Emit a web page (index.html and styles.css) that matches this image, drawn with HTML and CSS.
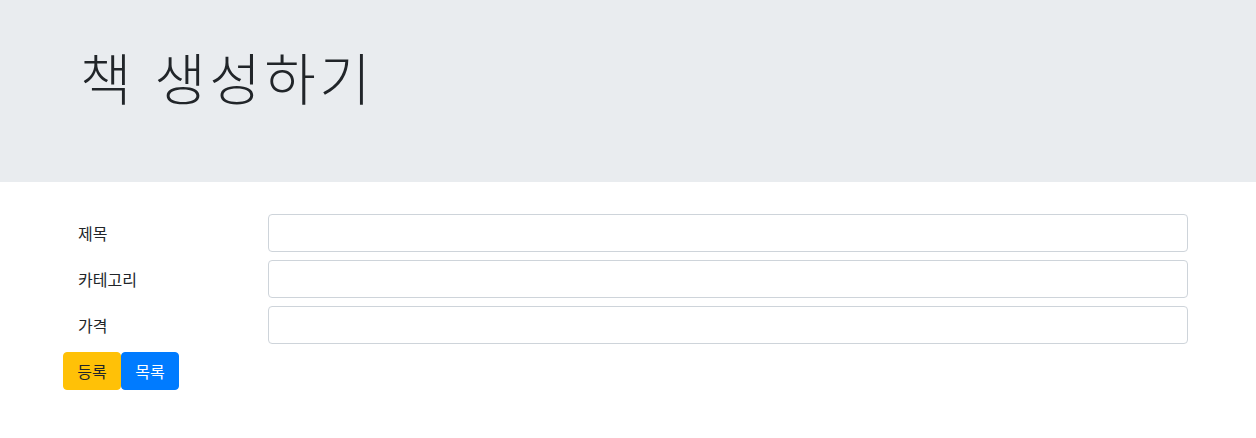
FILE: index.html
```html
<!DOCTYPE html>
<html lang="ko">
<head>
<meta charset="utf-8">
<link rel="stylesheet" href="styles.css">
</head>
<body>
<header class="jumbotron">
  <div class="container">
    <h1 class="title">책 생성하기</h1>
  </div>
</header>
<main class="container">
  <form class="form">
    <div class="row">
      <label class="label">제목</label>
      <div class="field"><input class="input" type="text"></div>
    </div>
    <div class="row">
      <label class="label">카테고리</label>
      <div class="field"><input class="input" type="text"></div>
    </div>
    <div class="row">
      <label class="label">가격</label>
      <div class="field"><input class="input" type="text"></div>
    </div>
    <div class="actions"><button type="button" class="btn btn-warning">등록</button><button type="button" class="btn btn-primary">목록</button></div>
  </form>
</main>
</body>
</html>
```
FILE: styles.css
```css
html, body {
  margin: 0;
  padding: 0;
}
body {
  font-family: "Noto Sans CJK KR", "Noto Sans", sans-serif;
  font-size: 16px;
  line-height: 1.5;
  color: #212529;
  background: #fff;
}
.container {
  width: 1140px;
  margin-left: 63px;
}
.jumbotron {
  background: #e9ecef;
  height: 182px;
  box-sizing: border-box;
  padding-top: 42px;
  margin-bottom: 32px;
}
.jumbotron .container {
  padding-left: 17px;
  box-sizing: border-box;
}
.title {
  margin: 0;
  font-size: 56px;
  font-weight: 300;
  line-height: 67px;
  letter-spacing: 3.5px;
}
.row {
  display: grid;
  grid-template-columns: 190px 1fr;
  margin-bottom: 8px;
}
.label {
  padding: 7px 15px;
  line-height: 24px;
}
.field {
  padding: 0 15px;
}
.input {
  display: block;
  width: 100%;
  box-sizing: border-box;
  height: 38px;
  border: 1px solid #ced4da;
  border-radius: 4px;
  padding: 6px 12px;
  font: inherit;
  background: #fff;
  outline: none;
}
.actions {
  display: flex;
}
.btn {
  font: inherit;
  line-height: 24px;
  min-width: 58px;
  padding: 6px 12px;
  border: 1px solid transparent;
  border-radius: 4px;
  text-align: center;
  cursor: pointer;
}
.btn-warning {
  background: #ffc107;
  border-color: #ffc107;
  color: #212529;
}
.btn-primary {
  background: #007bff;
  border-color: #007bff;
  color: #fff;
}
```
